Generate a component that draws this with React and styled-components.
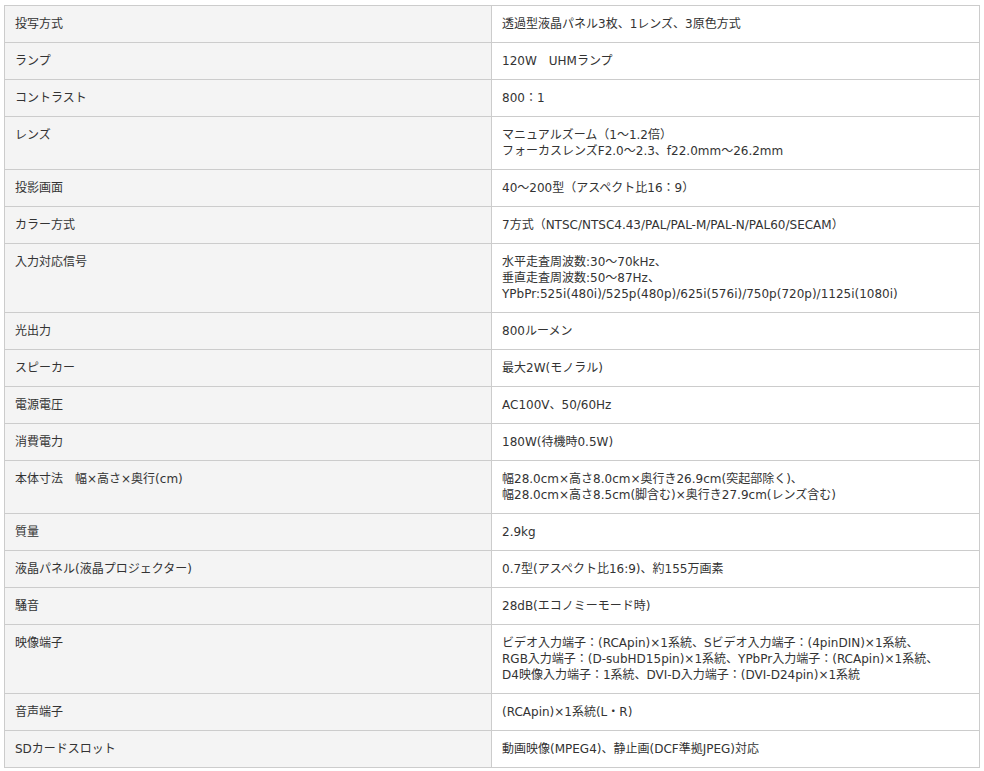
import React from "react";
import styled, { createGlobalStyle } from "styled-components";

const specs = [
  ["投写方式", ["透過型液晶パネル3枚、1レンズ、3原色方式"]],
  ["ランプ", ["120W　UHMランプ"]],
  ["コントラスト", ["800：1"]],
  ["レンズ", ["マニュアルズーム（1〜1.2倍）", "フォーカスレンズF2.0〜2.3、f22.0mm〜26.2mm"]],
  ["投影画面", ["40〜200型（アスペクト比16：9）"]],
  ["カラー方式", ["7方式（NTSC/NTSC4.43/PAL/PAL-M/PAL-N/PAL60/SECAM）"]],
  [
    "入力対応信号",
    [
      "水平走査周波数:30〜70kHz、",
      "垂直走査周波数:50〜87Hz、",
      "YPbPr:525i(480i)/525p(480p)/625i(576i)/750p(720p)/1125i(1080i)",
    ],
  ],
  ["光出力", ["800ルーメン"]],
  ["スピーカー", ["最大2W(モノラル)"]],
  ["電源電圧", ["AC100V、50/60Hz"]],
  ["消費電力", ["180W(待機時0.5W)"]],
  [
    "本体寸法　幅×高さ×奥行(cm)",
    ["幅28.0cm×高さ8.0cm×奥行き26.9cm(突起部除く)、", "幅28.0cm×高さ8.5cm(脚含む)×奥行き27.9cm(レンズ含む)"],
  ],
  ["質量", ["2.9kg"]],
  ["液晶パネル(液晶プロジェクター)", ["0.7型(アスペクト比16:9)、約155万画素"]],
  ["騒音", ["28dB(エコノミーモード時)"]],
  [
    "映像端子",
    [
      "ビデオ入力端子：(RCApin)×1系統、Sビデオ入力端子：(4pinDIN)×1系統、",
      "RGB入力端子：(D-subHD15pin)×1系統、YPbPr入力端子：(RCApin)×1系統、",
      "D4映像入力端子：1系統、DVI-D入力端子：(DVI-D24pin)×1系統",
    ],
  ],
  ["音声端子", ["(RCApin)×1系統(L・R)"]],
  ["SDカードスロット", ["動画映像(MPEG4)、静止画(DCF準拠JPEG)対応"]],
];

const App = function () {
  return (
    <>
      <GlobalStyle />
      <SpecTable>
        <tbody>
          {specs.map(([label, lines]) => (
            <tr key={label}>
              <Label>{label}</Label>
              <Value>
                {lines.map((line, i) => (
                  <Line key={i}>{line}</Line>
                ))}
              </Value>
            </tr>
          ))}
        </tbody>
      </SpecTable>
    </>
  );
};

export default App;

const GlobalStyle = createGlobalStyle`
  body {
    margin: 0;
    background: #fff;
    font-family: "DejaVu Sans", "Noto Sans CJK JP", sans-serif;
  }
`;

const SpecTable = styled.table`
  margin: 5px 4px;
  width: 976px;
  border-collapse: collapse;
  table-layout: fixed;
  font-size: 12px;
  line-height: 16px;
  color: #333;
`;

const Label = styled.td`
  width: 466px;
  padding: 10px 10px;
  border: 1px solid #ccc;
  background: #f4f4f4;
  vertical-align: top;
`;

const Value = styled.td`
  padding: 10px 10px;
  border: 1px solid #ccc;
  background: #fff;
  vertical-align: top;
`;

const Line = styled.div``;
